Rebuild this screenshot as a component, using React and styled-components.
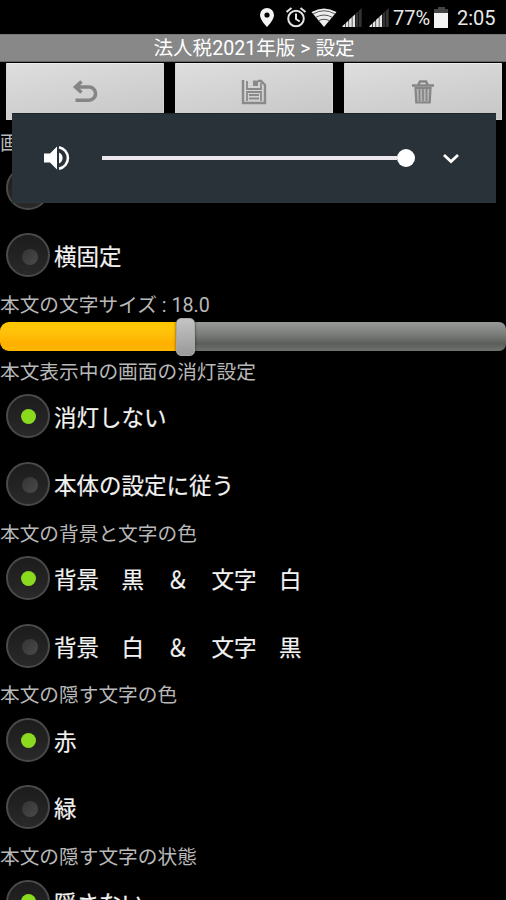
import React from "react";
import styled, { createGlobalStyle } from "styled-components";

const Global = createGlobalStyle`
  * { box-sizing: border-box; }
  html, body { margin: 0; background: #000; overflow: hidden; }
  body { font-family: Roboto, "Noto Sans CJK JP", sans-serif; color: #fff; }
`;

const Screen = styled.main`
  position: relative;
  width: 506px;
  height: 900px;
  overflow: hidden;
  background: #000;
`;

const StatusBar = styled.header`
  display: flex;
  height: 34px;
  justify-content: flex-end;
  padding: 1px 9px 0 0;
`;

const StatusIcons = styled.svg`
  display: block;
  flex: none;
`;

const StatusText = styled.span`
  font-size: 20px;
  line-height: 34px;
  width: ${(p) => p.$width}px;
  flex: none;
  white-space: nowrap;
  color: #e8e8e8;
`;

const Title = styled.h1`
  margin: 0;
  height: 28px;
  background: #888;
  border-top: 1px solid #777;
  border-bottom: 1px solid #666;
  font-size: 19.6px;
  font-weight: 400;
  line-height: 28px;
  text-align: center;
  white-space: nowrap;
  padding-left: 2px;
`;

const Toolbar = styled.nav`
  display: grid;
  grid-template-columns: repeat(3, 158px);
  gap: 11px;
  padding: 1px 0 0 6px;
  height: 65px;
`;

const ToolButton = styled.button`
  display: flex;
  align-items: center;
  justify-content: center;
  height: 57px;
  padding: 0;
  border: 1px solid #d4d4d4;
  border-top-color: #ececec;
  border-radius: 1px;
  background: linear-gradient(170deg, #dedede, #c6c6c6);
`;

const SectionLabel = styled.h2`
  margin: 0;
  height: 27px;
  padding-top: 3px;
  font-size: 19.7px;
  line-height: 27px;
  font-weight: 400;
  color: #b8b8b8;
  white-space: nowrap;
`;

const Option = styled.div`
  display: flex;
  align-items: center;
  height: 67.4px;
  padding-left: 6px;
`;

const OptionText = styled.span`
  margin-left: 4px;
  padding-top: 4px;
  font-size: 22.5px;
  font-weight: 400;
  -webkit-text-stroke: 0.2px #f2f2f2;
  line-height: 30px;
  white-space: pre;
  color: #f2f2f2;
`;

const Dial = styled.span`
  display: grid;
  place-items: center;
  flex: none;
  width: 44px;
  height: 44px;
  border: 2px solid #4a4a4a;
  border-radius: 50%;
  background: linear-gradient(#1c1c1c, #292929);
`;

const Lamp = styled.span`
  width: ${(p) => (p.$on ? 15 : 16)}px;
  height: ${(p) => (p.$on ? 15 : 16)}px;
  margin: ${(p) => (p.$on ? "0" : "3px 0 0 3px")};
  border-radius: 50%;
  background: ${(p) => (p.$on ? "#8ada20" : "linear-gradient(135deg, #343434, #4a4a4a)")};
`;

const SizeSlider = styled.div`
  display: flex;
  align-items: center;
  height: 40px;
  padding-top: 2px;
`;

const Filled = styled.div`
  width: 176px;
  height: 29px;
  border-radius: 9px 0 0 9px;
  background: linear-gradient(#ffc800, #ffc20a 35%, #ffb000 75%, #ffb800);
`;

const Thumb = styled.div`
  width: 19px;
  height: 38px;
  border: 1px solid #a8a8a8;
  border-radius: 5px;
  background: linear-gradient(#c4c4c4, #999);
  box-shadow: 0 0 3px #0009;
  z-index: 1;
`;

const Unfilled = styled.div`
  flex: 1;
  height: 29px;
  border-radius: 0 7px 7px 0;
  background: linear-gradient(#989a98, #7d7f7d 40%, #5c5e5a 75%, #70726f);
`;

const VolumePanel = styled.section`
  position: absolute;
  left: 12px;
  top: 113px;
  width: 484px;
  height: 90px;
  display: flex;
  align-items: center;
  padding-left: 31px;
  background: #293238;
  border-top: 1px solid #1b252c;
  border-bottom: 1px solid #2c3739;
`;

const VolumeTrack = styled.div`
  display: flex;
  align-items: center;
  width: 313px;
  height: 18px;
  margin: 0 27px 0 30px;
`;

const VolumeLine = styled.div`
  flex: 1;
  height: 4px;
  background: #ece6ee;
`;

const VolumeKnob = styled.div`
  width: 18px;
  height: 18px;
  border-radius: 50%;
  background: #fff;
`;

function Radio({ text, on }) {
  return (
    <Option role="radio" aria-checked={!!on}>
      <Dial><Lamp $on={on} /></Dial>
      <OptionText>{text}</OptionText>
    </Option>
  );
}

function Signal({ x }) {
  return (
    <g>
      {[0, 1, 2, 3, 4, 5].map((i) => (
        <path
          key={i}
          d={`M${x + i * 3.3} 26V${25 - i * 3.1}L${x + 2.7 + i * 3.3} ${22.5 - i * 3.1}V26Z`}
          fill={i < 4 ? "#e6e6e6" : "#333"}
        />
      ))}
    </g>
  );
}

export default function App() {
  return (
    <Screen>
      <Global />
      <StatusBar>
        <StatusIcons width="134" height="32" viewBox="258 0 134 32">
          <path fillRule="evenodd" d="M266 7a7 7 0 0 0-7 7c0 5 7 12 7 12s7-7 7-12a7 7 0 0 0-7-7Zm0 4.4a2.6 2.6 0 1 1 0 5.2 2.6 2.6 0 0 1 0-5.2Z" fill="#f2f2f2" />
          <g fill="none" stroke="#e4e4e4" strokeWidth="2">
            <circle cx="295" cy="17.5" r="7.8" />
            <path d="m285.500 11 5-4m14 4-5-4M295 12.5V18l3.7 2.5" />
          </g>
          <path d="M323 26 310.500 11q12.500-7 25 0Z" fill="#eee" />
          <path d="M312 13q11-6.5 22 0M314.5 16.5q8.5-5 17 0M317 20q6-3.5 12 0" fill="none" stroke="#555" strokeWidth="1" />
          <Signal x={341.5} />
          <Signal x={368.5} />
        </StatusIcons>
        <StatusText $width={41}>77%</StatusText>
        <StatusIcons width="23" height="32" viewBox="433 0 23 32">
          <path d="M437 6h7v2h3v4h-14V8h4Z" fill="#444" />
          <path d="M433 12h14v15h-14Z" fill="#f3f3f3" />
        </StatusIcons>
        <StatusText $width={40}>2:05</StatusText>
      </StatusBar>
      <Title>法人税2021年版 &gt; 設定</Title>
      <Toolbar>
        <ToolButton aria-label="戻る">
          <svg width="26" height="24" viewBox="0 0 26 24">
            <path d="M2.500 7h14.500a6.600 6.600 0 0 1 0 13.200H3.500M9.500 1.500l-6 5.500 6 5.500" fill="none" stroke="#858585" strokeWidth="3.600" />
          </svg>
        </ToolButton>
        <ToolButton aria-label="保存">
          <svg width="26" height="26" viewBox="0 0 26 26" fill="none" stroke="#8a8a8a">
            <path d="M2 1v23h22V6l-4-4h-3" strokeWidth="2.400" />
            <path d="M6 2v8h14V4M6 22v-9h14v9" strokeWidth="1.800" />
            <path d="M12 1.500h5V7h-5Z" fill="#8a8a8a" stroke="none" />
            <path d="M8 16h10M8 19.500h10" strokeWidth="1.800" />
          </svg>
        </ToolButton>
        <ToolButton aria-label="削除">
          <svg width="24" height="26" viewBox="0 0 24 26" fill="none" stroke="#858585">
            <path d="M1 6.500h22M7.500 5.500 9 2.500h6l1.500 3" strokeWidth="2.600" />
            <path d="M4.500 9h15l-.8 14.500H5.300Z" strokeWidth="2.200" fill="#b5b5b5" />
            <path d="M8.500 10v12M12 10v12M15.500 10v12" strokeWidth="1.700" />
          </svg>
        </ToolButton>
      </Toolbar>
      <SectionLabel>画面の向き</SectionLabel>
      <Radio text="縦固定" />
      <Radio text="横固定" />
      <SectionLabel>本文の文字サイズ : 18.0</SectionLabel>
      <SizeSlider>
        <Filled />
        <Thumb />
        <Unfilled />
      </SizeSlider>
      <SectionLabel>本文表示中の画面の消灯設定</SectionLabel>
      <Radio text="消灯しない" on />
      <Radio text="本体の設定に従う" />
      <SectionLabel>本文の背景と文字の色</SectionLabel>
      <Radio text="背景　黒　＆　文字　白" on />
      <Radio text="背景　白　＆　文字　黒" />
      <SectionLabel>本文の隠す文字の色</SectionLabel>
      <Radio text="赤" on />
      <Radio text="緑" />
      <SectionLabel>本文の隠す文字の状態</SectionLabel>
      <Radio text="隠さない" on />
      <VolumePanel>
        <svg width="29" height="28" viewBox="0 0 29 28">
          <path d="M1 9.500h6L14 2.500v23l-7-7H1Z" fill="#fff" />
          <path d="M16 8.500a6 6 0 0 1 0 11Z" fill="#fff" />
          <path d="M16 3.200a11 11 0 0 1 0 21.600" fill="none" stroke="#fff" strokeWidth="2.600" />
        </svg>
        <VolumeTrack>
          <VolumeLine />
          <VolumeKnob />
        </VolumeTrack>
        <svg width="18" height="12" viewBox="0 0 18 12">
          <path d="m2 3 7 6.500 7-6.500" fill="none" stroke="#fff" strokeWidth="2.800" />
        </svg>
      </VolumePanel>
    </Screen>
  );
}
